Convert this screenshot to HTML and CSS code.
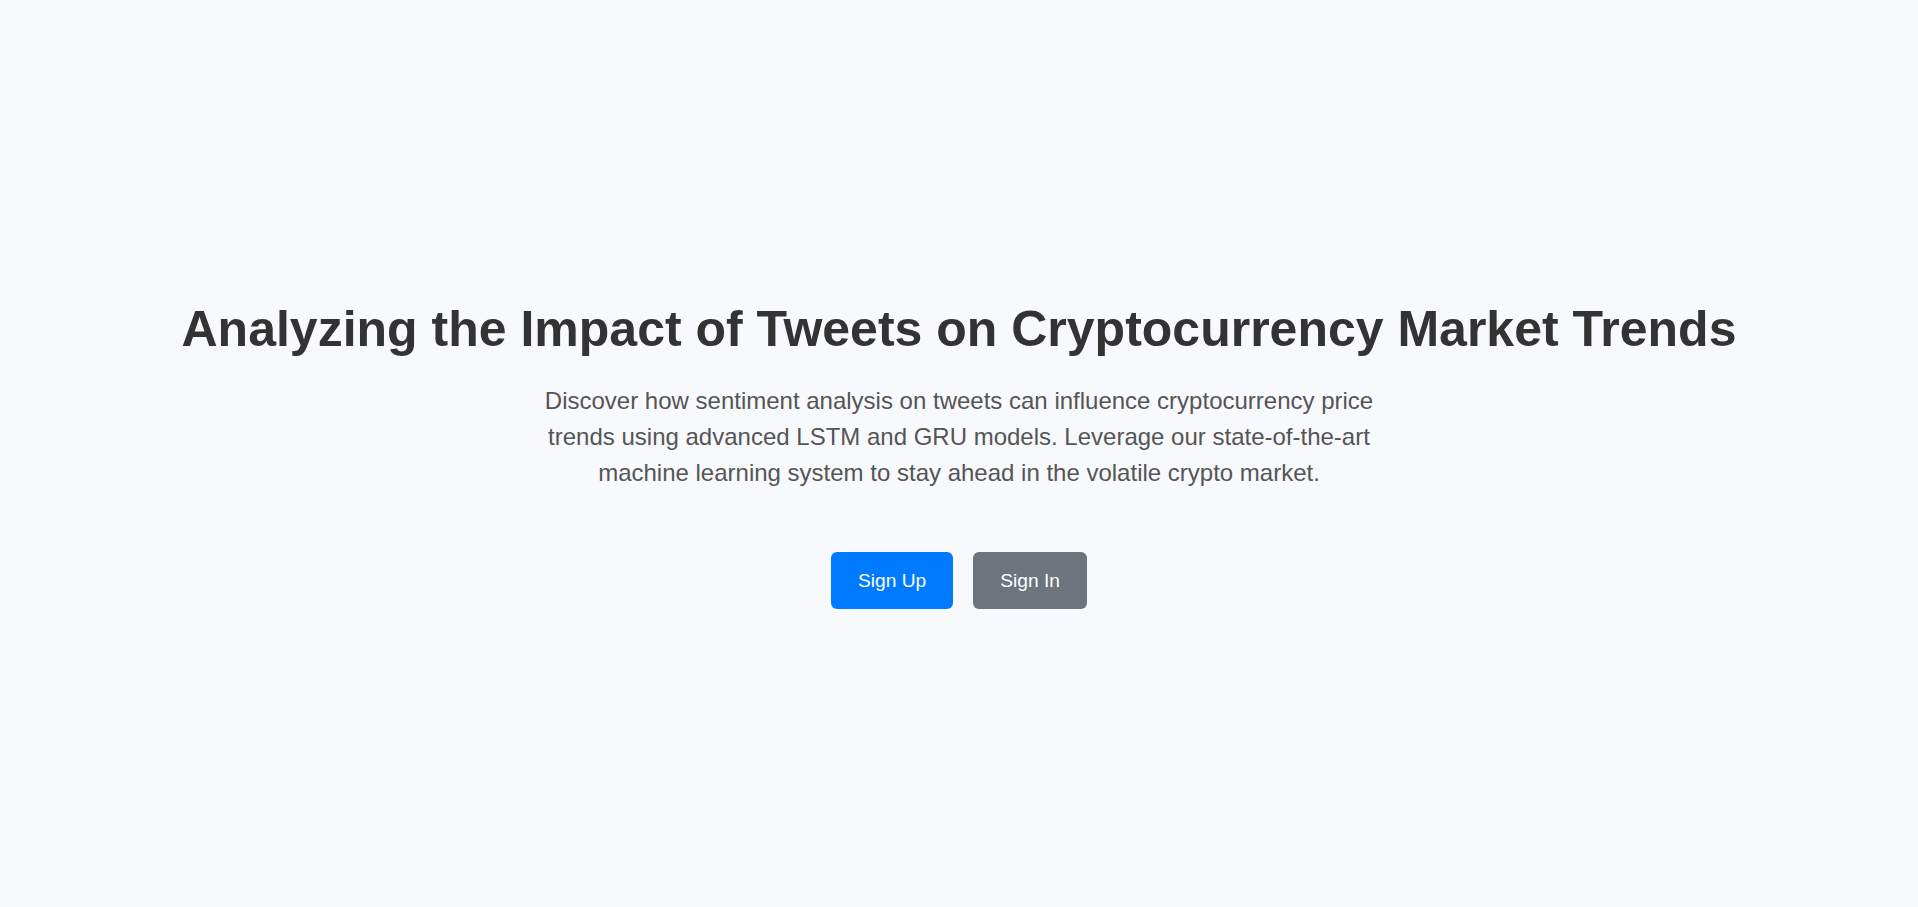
FILE: index.html
```html
<!DOCTYPE html>
<html lang="en">
<head>
<meta charset="utf-8">
<title>Crypto Tweet Sentiment</title>
<link rel="stylesheet" href="styles.css">
</head>
<body>
<main class="hero">
  <h1 class="hero-title">Analyzing the Impact of Tweets on Cryptocurrency Market Trends</h1>
  <p class="hero-text">Discover how sentiment analysis on tweets can influence cryptocurrency price trends using advanced LSTM and GRU models. Leverage our state-of-the-art machine learning system to stay ahead in the volatile crypto market.</p>
  <div class="hero-actions">
    <a class="btn btn-primary" href="#">Sign Up</a>
    <a class="btn btn-secondary" href="#">Sign In</a>
  </div>
</main>
</body>
</html>
```
FILE: styles.css
```css
html, body {
  margin: 0;
  padding: 0;
}
body {
  background: #f8f9fc;
  font-family: "Liberation Sans", Arial, sans-serif;
  color: #333;
}
.hero {
  min-height: 100vh;
  display: flex;
  flex-direction: column;
  align-items: center;
  justify-content: center;
  text-align: center;
  box-sizing: border-box;
}
.hero-title {
  margin: 0;
  font-size: 50px;
  line-height: 1.2;
  font-weight: 700;
  color: #333;
}
.hero-text {
  margin: 24px 0 0;
  max-width: 860px;
  font-size: 24px;
  line-height: 36px;
  color: #555;
}
.hero-actions {
  margin-top: 61px;
  display: flex;
  gap: 20px;
}
.btn {
  display: inline-block;
  padding: 14px 27px;
  font-size: 19.2px;
  line-height: 29px;
  border-radius: 6px;
  color: #fff;
  text-decoration: none;
}
.btn-primary {
  background: #007bff;
}
.btn-secondary {
  background: #6c757d;
}
```
